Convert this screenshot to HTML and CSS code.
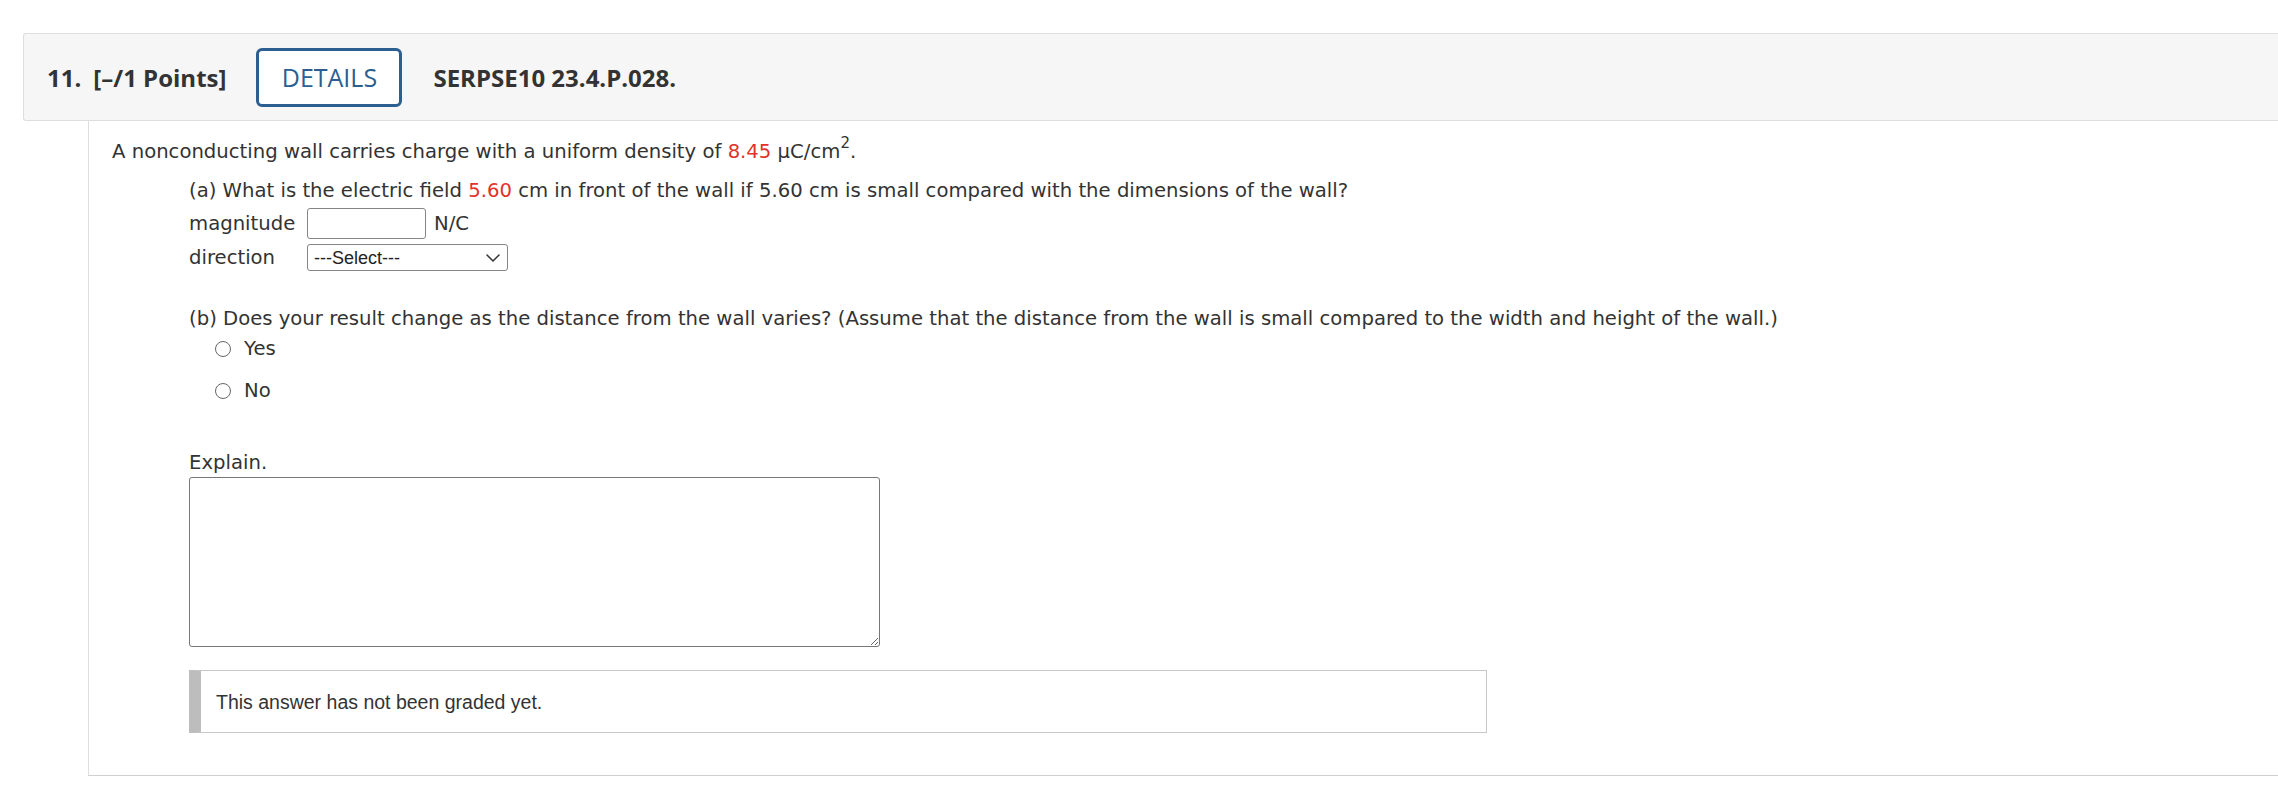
FILE: index.html
```html
<!DOCTYPE html>
<html lang="en">
<head>
<meta charset="utf-8">
<title>Question 11</title>
<link rel="stylesheet" href="styles.css">
</head>
<body>
<div class="question">
  <div class="qhead">
    <span class="qnum">11.</span>
    <span class="qpts">[–/1 Points]</span>
    <button class="details" type="button">DETAILS</button>
    <span class="qid">SERPSE10 23.4.P.028.</span>
  </div>
  <div class="qbody">
    <p class="stem">A nonconducting wall carries charge with a uniform density of <span class="val">8.45</span> µC/cm<sup>2</sup>.</p>
    <div class="part">
      <p class="prompt prompt-a">(a) What is the electric field <span class="val">5.60</span> cm in front of the wall if 5.60 cm is small compared with the dimensions of the wall?</p>
      <div class="field field-mag">
        <span class="flabel">magnitude</span>
        <input class="answer" type="text" aria-label="magnitude">
        <span class="unit">N/C</span>
      </div>
      <div class="field field-dir">
        <span class="flabel">direction</span>
        <div class="select">
          <span class="select-text">---Select---</span>
          <svg class="chev" width="14" height="8" viewBox="0 0 14 8"><path d="M1 1 L7 7 L13 1" fill="none" stroke="#333" stroke-width="1.5" stroke-linecap="round" stroke-linejoin="round"/></svg>
        </div>
      </div>

      <p class="prompt prompt-b">(b) Does your result change as the distance from the wall varies? (Assume that the distance from the wall is small compared to the width and height of the wall.)</p>
      <label class="choice choice-yes"><input class="radio" type="radio" name="partb"><span>Yes</span></label>
      <label class="choice choice-no"><input class="radio" type="radio" name="partb"><span>No</span></label>

      <p class="explain-label">Explain.</p>
      <textarea class="explain" aria-label="Explain"></textarea>
      <div class="grade">This answer has not been graded yet.</div>
    </div>
  </div>
</div>
</body>
</html>
```
FILE: styles.css
```css
html, body {
  margin: 0;
  padding: 0;
  background: #fff;
}

body {
  overflow: hidden;
  color: #333;
  font-family: "DejaVu Sans", Verdana, sans-serif;
}

.question {
  margin: 33px 0 0 23px;
}

/* ---------- header bar ---------- */
.qhead {
  display: flex;
  align-items: center;
  box-sizing: border-box;
  height: 88px;
  padding-left: 23px;
  background: #f6f6f6;
  border: 1px solid #dedede;
  border-right: 0;
  border-radius: 3px 0 0 3px;
  font-family: "Open Sans", "Noto Sans", sans-serif;
  font-weight: 700;
  font-size: 24px;
  color: #333;
}

.qpts {
  margin-left: 12px;
}

.details {
  box-sizing: border-box;
  width: 146px;
  height: 59px;
  margin-left: 30px;
  padding: 0;
  background: #fff;
  border: 3px solid #2b5f91;
  border-radius: 6px;
  color: #2b5f91;
  font-family: "Open Sans", "Noto Sans", sans-serif;
  font-weight: 400;
  font-size: 25px;
}

.qid {
  margin-left: 31px;
}

/* ---------- body ---------- */
.qbody {
  margin-left: 65px;
  padding: 18px 0 42px 23px;
  border-left: 1px solid #dedede;
  border-bottom: 1px solid #cfcfcf;
  font-size: 19.65px;
  line-height: 26px;
}

.qbody p {
  margin: 0;
}

.val {
  color: #e2322a;
}

sup {
  font-size: 15px;
  line-height: 0;
  vertical-align: 10px;
}

.part {
  padding-left: 77px;
}

.prompt-a {
  margin-top: 13px !important;
}

.field {
  display: flex;
  align-items: center;
}

.field-mag {
  margin-top: 4px;
}

.field-dir {
  margin-top: 5px;
}

.flabel {
  flex: 0 0 118px;
}

.answer {
  box-sizing: border-box;
  width: 119px;
  height: 31px;
  margin: 0;
  border: 1px solid #858585;
  border-radius: 3px;
  background: #fff;
}

.unit {
  margin-left: 8px;
}

.select {
  box-sizing: border-box;
  display: flex;
  align-items: center;
  justify-content: space-between;
  width: 201px;
  height: 27px;
  padding: 0 7px 0 6px;
  border: 1px solid #858585;
  border-radius: 3px;
  background: #fff;
  font-family: "Liberation Sans", Arial, sans-serif;
  font-size: 18px;
  color: #222;
}

.chev {
  display: block;
}

.prompt-b {
  margin-top: 35px !important;
}

.choice {
  display: flex;
  align-items: center;
  padding-left: 26px;
}

.choice-yes {
  margin-top: 4px;
}

.choice-no {
  margin-top: 16px;
}

.radio {
  appearance: none;
  -webkit-appearance: none;
  box-sizing: border-box;
  width: 16px;
  height: 16px;
  margin: 0 13px 0 0;
  border: 1px solid #666;
  border-radius: 50%;
  background: #fff;
}

.explain-label {
  margin-top: 46px !important;
}

.explain {
  display: block;
  box-sizing: border-box;
  width: 691px;
  height: 170px;
  margin: 1px 0 0 0;
  border: 1px solid #777;
  border-radius: 3px;
  background: #fff;
}

.grade {
  box-sizing: border-box;
  width: 1298px;
  margin-top: 23px;
  padding: 19.5px 15px;
  border: 1px solid #c8c8c8;
  border-left: 12px solid #bdbdbd;
  font-family: "Liberation Sans", Arial, sans-serif;
  font-size: 19.5px;
  line-height: 22px;
  color: #333;
}
```
